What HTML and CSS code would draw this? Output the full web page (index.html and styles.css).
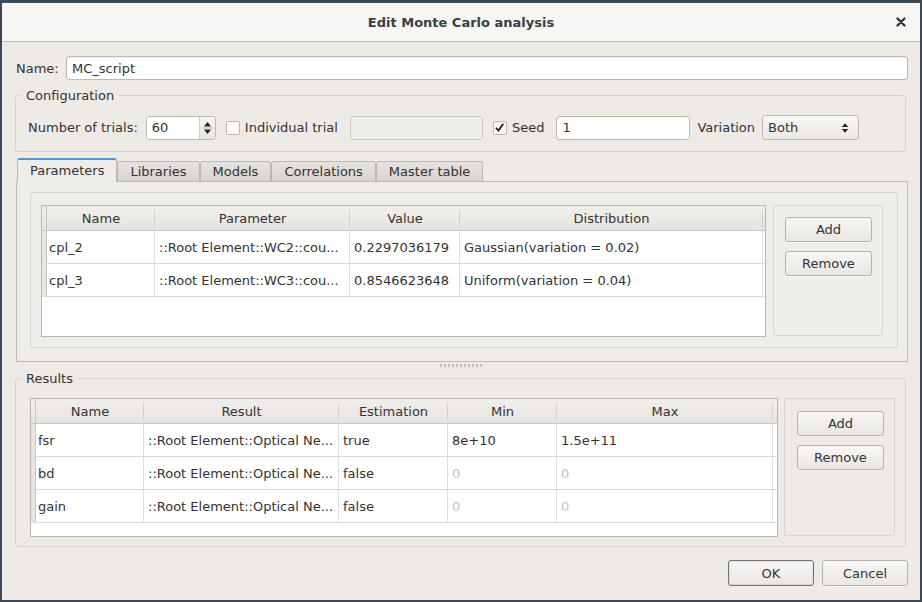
FILE: index.html
```html
<!DOCTYPE html>
<html>
<head>
<meta charset="utf-8">
<title>Edit Monte Carlo analysis</title>
<link rel="stylesheet" href="styles.css">
</head>
<body>
<div class="window">
  <div class="titlebar">
    <span></span>
    <span class="title">Edit Monte Carlo analysis</span>
    <span class="close"><svg width="10" height="10" viewBox="0 0 10 10"><path d="M1.5 1.5 L8.5 8.5 M8.5 1.5 L1.5 8.5" stroke="#2e3436" stroke-width="2.3" stroke-linecap="round"/></svg></span>
  </div>
  <div class="content">
    <div class="name-row">
      <span class="name-label">Name:</span>
      <div class="input name-input">MC_script</div>
    </div>

    <fieldset class="group config">
      <legend>Configuration</legend>
      <div class="config-row">
        <span class="lbl-trials">Number of trials:</span>
        <div class="spin">
          <span class="spin-val">60</span>
          <span class="spin-arrows"><svg width="15" height="22" viewBox="0 0 15 22"><path d="M4 9.5 L7.5 5 L11 9.5Z M4 12.5 L7.5 17 L11 12.5Z" fill="#222"/><path d="M1 11 H14" stroke="#c9c5c0" stroke-width="1"/></svg></span>
        </div>
        <span class="check chk-indiv"></span>
        <span class="chk-text">Individual trial</span>
        <div class="input disabled trial-input"></div>
        <span class="check checked chk-seed"><svg width="11" height="11" viewBox="0 0 11 11"><path d="M2 5.8 L4.6 8.6 L9.2 1.8" fill="none" stroke="#222" stroke-width="1.9"/></svg></span>
        <span class="chk-text">Seed</span>
        <div class="input seed-input">1</div>
        <span class="lbl-variation">Variation</span>
        <div class="combo"><span>Both</span><svg width="8" height="12" viewBox="0 0 8 12"><path d="M0.8 5 L4 1.2 L7.2 5Z M0.8 7 L4 10.8 L7.2 7Z" fill="#222"/></svg></div>
      </div>
    </fieldset>

    <div class="tabs">
      <div class="tab active">Parameters</div>
      <div class="tab">Libraries</div>
      <div class="tab">Models</div>
      <div class="tab">Correlations</div>
      <div class="tab">Master table</div>
    </div>
    <div class="tab-panel">
      <div class="frame">
        <div class="table params">
          <div class="tr th"><div class="strip"></div><div class="td">Name</div><div class="td">Parameter</div><div class="td">Value</div><div class="td">Distribution</div><div class="td end"></div></div>
          <div class="tr"><div class="strip"></div><div class="td first">cpl_2</div><div class="td">::Root Element::WC2::cou...</div><div class="td">0.2297036179</div><div class="td">Gaussian(variation = 0.02)</div><div class="td end"></div></div>
          <div class="tr"><div class="strip"></div><div class="td first">cpl_3</div><div class="td">::Root Element::WC3::cou...</div><div class="td">0.8546623648</div><div class="td">Uniform(variation = 0.04)</div><div class="td end"></div></div>
          <div class="filler"></div>
        </div>
        <div class="btnbox params-btns">
          <button class="btn">Add</button>
          <button class="btn">Remove</button>
        </div>
      </div>
    </div>

    <div class="splitter"><span class="grip"></span></div>

    <fieldset class="group results">
      <legend>Results</legend>
      <div class="results-body">
        <div class="table res">
          <div class="tr th"><div class="strip"></div><div class="td">Name</div><div class="td">Result</div><div class="td">Estimation</div><div class="td">Min</div><div class="td">Max</div><div class="td end"></div></div>
          <div class="tr"><div class="strip"></div><div class="td first">fsr</div><div class="td">::Root Element::Optical Ne...</div><div class="td">true</div><div class="td">8e+10</div><div class="td">1.5e+11</div><div class="td end"></div></div>
          <div class="tr"><div class="strip"></div><div class="td first">bd</div><div class="td">::Root Element::Optical Ne...</div><div class="td">false</div><div class="td dis">0</div><div class="td dis">0</div><div class="td end"></div></div>
          <div class="tr"><div class="strip"></div><div class="td first">gain</div><div class="td">::Root Element::Optical Ne...</div><div class="td">false</div><div class="td dis">0</div><div class="td dis">0</div><div class="td end"></div></div>
          <div class="filler"></div>
        </div>
        <div class="btnbox res-btns">
          <button class="btn">Add</button>
          <button class="btn">Remove</button>
        </div>
      </div>
    </fieldset>

    <div class="dialog-buttons">
      <button class="btn dlg default">OK</button>
      <button class="btn dlg">Cancel</button>
    </div>
  </div>
</div>
</body>
</html>
```

FILE: styles.css
```css
* { box-sizing: border-box; }

html, body {
  margin: 0;
  padding: 0;
}

body {
  background: #3c4a58;
  width: 922px;
  height: 602px;
  overflow: hidden;
  font-family: "DejaVu Sans", "Liberation Sans", sans-serif;
  font-size: 13px;
  color: #333333;
}

.window {
  width: 918px;
  height: 597px;
  margin: 3px 0 0 2px;
  background: #eeebe7;
  display: flex;
  flex-direction: column;
}

.titlebar {
  height: 39px;
  flex: none;
  background: #f6f6f5;
  border-bottom: 1px solid #bcbab6;
  display: grid;
  grid-template-columns: 1fr auto 1fr;
  align-items: center;
}

.title {
  font-weight: bold;
  color: #3a3f41;
  font-size: 13px;
}

.close {
  justify-self: end;
  padding-right: 14px;
  display: flex;
  align-items: center;
}

.content {
  padding: 14px 12px 0 14px;
  display: flex;
  flex-direction: column;
}

/* Name row */
.name-row {
  display: flex;
  align-items: center;
  height: 24px;
}

.name-label {
  width: 50px;
}

.input {
  height: 24px;
  background: #ffffff;
  border: 1px solid #bdb9b4;
  border-radius: 3px;
  box-shadow: inset 0 1px 1px rgba(0, 0, 0, 0.06);
  padding: 0 5px;
  display: flex;
  align-items: center;
  color: #333333;
}

.name-input {
  flex: 1;
}

/* Group boxes */
.group {
  margin: 0 2px 0 -1px;
  border: 1px solid #d6d2cd;
  border-radius: 3px;
  min-width: 0;
}

.group legend {
  padding: 0 5px;
  line-height: 15px;
  color: #333333;
}

.config {
  margin-top: 8px;
  padding: 12px 12px 11px 12px;
}

.config legend {
  margin-left: -7px;
}

.config-row {
  display: flex;
  align-items: center;
  height: 25px;
}

.spin {
  margin-left: 8px;
  width: 70px;
  height: 24px;
  background: #ffffff;
  border: 1px solid #bdb9b4;
  border-radius: 3px;
  display: flex;
  align-items: stretch;
}

.spin-val {
  flex: 1;
  padding-left: 5px;
  display: flex;
  align-items: center;
}

.spin-arrows {
  width: 16px;
  border-left: 1px solid #d3cfca;
  background: linear-gradient(#f6f5f3, #e8e5e1);
  border-radius: 0 2px 2px 0;
  display: flex;
  align-items: center;
  justify-content: center;
}

.check {
  width: 14px;
  height: 14px;
  border: 1px solid #bab6b1;
  border-radius: 2px;
  background: #fafaf9;
  display: flex;
  align-items: center;
  justify-content: center;
}

.chk-indiv { margin-left: 10px; }
.chk-seed { margin-left: 10px; }

.chk-text {
  margin-left: 5px;
}

.trial-input {
  margin-left: 12px;
  width: 133px;
}

.input.disabled {
  background: #efedea;
  border-color: #c9c5c0;
  box-shadow: none;
}

.seed-input {
  margin-left: 12px;
  width: 134px;
}

.lbl-variation {
  margin-left: 7px;
}

.combo {
  margin-left: 7px;
  width: 97px;
  height: 25px;
  border: 1px solid #bdb9b4;
  border-radius: 3px;
  background: linear-gradient(#f8f7f6, #ebe8e4);
  display: flex;
  align-items: center;
  justify-content: space-between;
  padding: 0 9px 0 5px;
}

/* Tabs */
.tabs {
  margin-top: 6px;
  height: 23px;
  display: flex;
  align-items: flex-end;
  padding-left: 1px;
}

.tab {
  height: 20px;
  padding: 0 12px;
  border: 1px solid #bbb7b2;
  border-bottom: none;
  border-radius: 3px 3px 0 0;
  background: linear-gradient(#e6e3df, #d8d4cf);
  display: flex;
  align-items: center;
  color: #333333;
}

.tab.active {
  height: 24px;
  margin-bottom: -1px;
  position: relative;
  z-index: 1;
  background: #efedea;
  border-top: 2px solid #4f94d4;
  padding-bottom: 1px;
}

.tab-panel {
  border: 1px solid #bdb9b4;
  background: #efedea;
  padding: 10px 9px 13px 13px;
}

.frame {
  border: 1px solid #d5d1cc;
  border-radius: 3px;
  padding: 12px 14px 10px 10px;
  display: flex;
  gap: 7px;
}

/* Tables */
.table {
  border: 1px solid #b9b5b0;
  background: #ffffff;
  display: flex;
  flex-direction: column;
}

.params { width: 725px; height: 132px; }
.res { width: 748px; height: 139px; }

.tr {
  display: grid;
  height: 33px;
  flex: none;
}

.params .tr { grid-template-columns: 5px 108px 195px 110px 303px 1fr; }
.res .tr { grid-template-columns: 5px 108px 195px 109px 109px 216px 1fr; }

.tr.th {
  height: 25px;
  background: linear-gradient(#f1efec, #e7e4e0);
  border-bottom: 1px solid #cbc7c2;
}

.strip {
  background: #e9e6e2;
  border-right: 1px solid #c9c5c0;
}

.th .strip {
  background: transparent;
}

.td {
  display: flex;
  align-items: center;
  padding-left: 4px;
  white-space: nowrap;
  overflow: hidden;
  border-right: 1px solid #dedede;
  border-bottom: 1px solid #dadada;
  color: #333333;
}

.td.first { padding-left: 2px; }
.td.dis { color: #c2c2c2; }

.td.end {
  border-right: none;
}

.th .td {
  justify-content: center;
  padding-left: 0;
  border-bottom: none;
  border-right: none;
  background: linear-gradient(#d3cfca, #d3cfca) right center / 1px 17px no-repeat;
}

.th .td.end {
  background: none;
}

.filler {
  flex: 1;
  background: #ffffff;
}

/* Button boxes */
.btnbox {
  border: 1px solid #d8d4cf;
  border-radius: 2px;
  display: flex;
  flex-direction: column;
  align-items: flex-start;
  gap: 9px;
}

.params-btns {
  width: 110px;
  height: 131px;
  padding: 11px 0 0 11px;
}

.res-btns {
  width: 111px;
  height: 138px;
  padding: 12px 0 0 12px;
}

.btn {
  font-family: "DejaVu Sans", "Liberation Sans", sans-serif;
  font-size: 13px;
  color: #333333;
  width: 87px;
  height: 25px;
  padding: 0;
  border: 1px solid #b5b1ac;
  border-radius: 3px;
  background: linear-gradient(#f8f7f6, #e9e6e2);
  box-shadow: 0 1px 0 rgba(255, 255, 255, 0.6);
}

/* Splitter */
.splitter {
  height: 9px;
  display: flex;
  justify-content: center;
  align-items: flex-start;
  padding-top: 2px;
}

.grip {
  width: 44px;
  height: 3px;
  background: repeating-linear-gradient(90deg, #c3bfba 0 2px, transparent 2px 4px);
}

.results {
  padding: 12px 10px 9px 14px;
}

.results legend {
  margin-left: -9px;
}

.results-body {
  display: flex;
  gap: 6px;
}

/* Dialog buttons */
.dialog-buttons {
  margin-top: 13px;
  display: flex;
  justify-content: flex-end;
  gap: 8px;
}

.btn.dlg {
  width: 86px;
  height: 26px;
}

.btn.default {
  border-color: #77736e;
  box-shadow: inset 0 0 0 1px rgba(0, 0, 0, 0.08);
}
```
